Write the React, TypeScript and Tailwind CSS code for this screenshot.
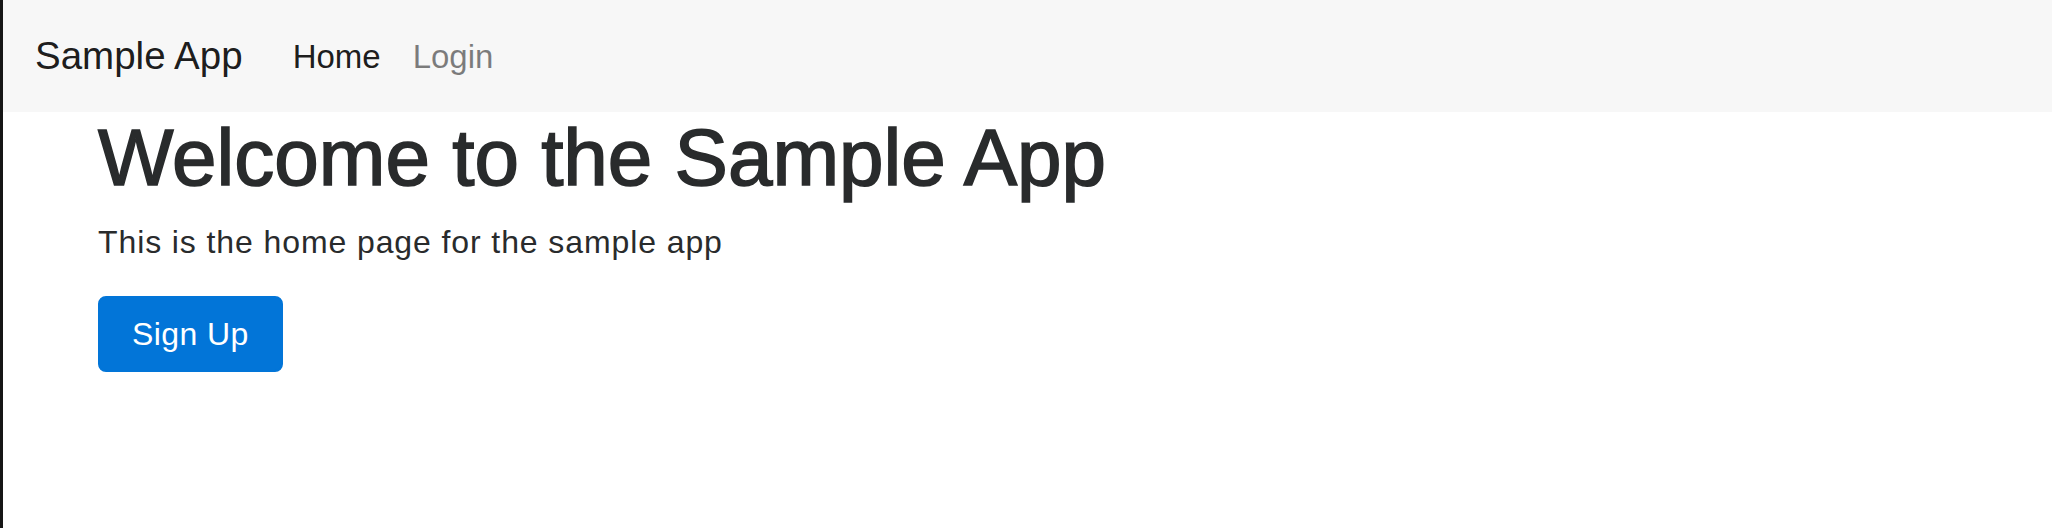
const App = () => {
  return (
    <div className="min-h-[528px] border-l-[3px] border-[#161616] bg-white font-['Liberation_Sans',Arial,sans-serif]">
      <nav className="flex h-[112px] items-center bg-[#f7f7f7] pl-[32px]">
        <a href="#" className="mr-[34px] text-[38.5px] leading-[60px] text-black/90">
          Sample App
        </a>
        <ul className="flex pt-[1px]">
          <li>
            <a href="#" className="block px-4 text-[33px] leading-[48px] text-black/90">
              Home
            </a>
          </li>
          <li>
            <a href="#" className="block px-4 text-[33px] leading-[48px] text-black/50">
              Login
            </a>
          </li>
        </ul>
      </nav>

      <main className="pl-[95px] text-[#292b2c]">
        <h1 className="mt-[2px] mb-[16px] text-[80px] leading-[88px] font-medium [-webkit-text-stroke:1.6px_#292b2c]">
          Welcome to the Sample App
        </h1>
        <p className="mb-[30px] text-[32px] leading-[48px] tracking-[0.9px]">
          This is the home page for the sample app
        </p>
        <a
          href="#"
          className="inline-block rounded-[8px] border-2 border-[#0275d8] bg-[#0275d8] px-[32px] py-[16px] text-[32px] leading-[40px] tracking-[0.4px] text-white"
        >
          Sign Up
        </a>
      </main>
    </div>
  );
};

export default App;
